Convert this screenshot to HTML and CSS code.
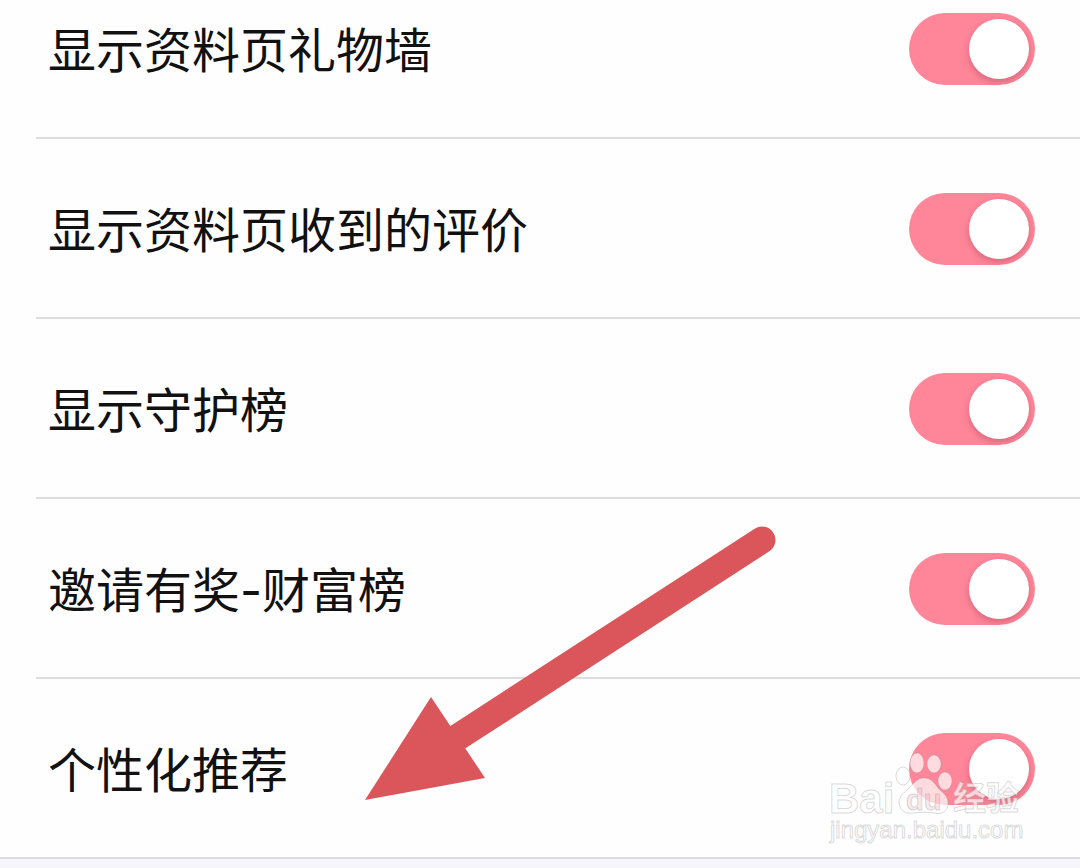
FILE: index.html
```
<!DOCTYPE html>
<html lang="zh-CN">
<head>
    <meta charset="UTF-8">
    <meta name="viewport" content="width=device-width, initial-scale=1.0">
    <title>隐私设置</title>
    <link rel="stylesheet" href="styles.css">
</head>
<body>
    <main class="settings">
        <div class="row">
            <label for="gift-wall">显示资料页礼物墙</label>
            <input type="checkbox" class="switch" id="gift-wall" checked>
        </div>
        <div class="row">
            <label for="reviews">显示资料页收到的评价</label>
            <input type="checkbox" class="switch" id="reviews" checked>
        </div>
        <div class="row">
            <label for="guard-rank">显示守护榜</label>
            <input type="checkbox" class="switch" id="guard-rank" checked>
        </div>
        <div class="row">
            <label for="wealth-rank">邀请有奖-财富榜</label>
            <input type="checkbox" class="switch" id="wealth-rank" checked>
        </div>
        <div class="row">
            <label for="recommend">个性化推荐</label>
            <input type="checkbox" class="switch" id="recommend" checked>
        </div>

        <!-- Arrow pointing at the last setting -->
        <svg class="arrow" width="412" height="276" viewBox="0 0 412 276" aria-hidden="true">
            <line x1="90" y1="214" x2="397" y2="15" stroke="#db565b" stroke-width="27" stroke-linecap="round"/>
            <path d="M0 275L66 172L120 253Z" fill="#db565b"/>
        </svg>

        <!-- Watermark -->
        <svg class="watermark" width="210" height="104" viewBox="0 0 210 104" aria-hidden="true">
            <g class="mark">
                <text class="brand" x="5" y="67">Bai</text>
                <ellipse cx="79" cy="30" rx="7" ry="9"/>
                <ellipse cx="93" cy="17" rx="7" ry="10"/>
                <ellipse cx="110" cy="18" rx="7" ry="9"/>
                <ellipse cx="121" cy="35" rx="7" ry="9"/>
                <path d="M100 32C92 32 89 39 83 44C77 49 75 52 75 57C76 65 82 68 89 67C97 66 103 66 110 67C119 69 124 65 124 57C124 50 119 47 115 43C110 37 108 32 100 32Z"/>
                <text class="du" x="82" y="64">du</text>
                <text class="cjk" x="129" y="64">经验</text>
                <text class="url" x="6" y="92">jingyan.baidu.com</text>
            </g>
        </svg>
    </main>
</body>
</html>
```
FILE: styles.css
```
* {
    box-sizing: border-box;
}
body {
    margin: 0;
    background-color: #f5f5fb;
    color: #111;
    font-family: Inter, "Noto Sans CJK SC", sans-serif;
}
.settings {
    position: relative;
    background-color: #fefefe;
    border-bottom: 2px solid #dcdce0;
}
.row {
    display: flex;
    align-items: center;
    justify-content: space-between;
    margin-left: 36px;
    padding: 54px 45px 52px 12px;
    border-bottom: 2px solid #ddd;
}
.row:first-child {
    padding-top: 13px;
}
.row:nth-child(5) {
    border-bottom: none;
}
.row label {
    padding-top: 4px;
    font-size: 48px;
    line-height: 68px;
}
.switch {
    appearance: none;
    flex: none;
    width: 126px;
    height: 72px;
    margin: 0;
    padding: 6px;
    border-radius: 36px;
    background-color: #ccc;
    cursor: pointer;
}
.switch::before {
    content: "";
    display: block;
    width: 60px;
    height: 60px;
    border-radius: 50%;
    background-color: #fff;
    box-shadow: 0 3px 6px rgba(90, 20, 40, 0.25);
}
.switch:checked {
    background-color: #ff8598;
}
.switch:checked::before {
    margin-left: auto;
}
.arrow {
    position: absolute;
    left: 365px;
    bottom: 56px;
    pointer-events: none;
}
.watermark {
    position: absolute;
    right: 46px;
    bottom: 7px;
    pointer-events: none;
}
.mark {
    fill: rgba(255, 255, 255, 0.7);
    stroke: rgba(150, 150, 150, 0.35);
    stroke-width: 1;
}
.brand {
    font: bold 42px "Liberation Sans", sans-serif;
}
.du {
    font: bold 29px "Liberation Sans", sans-serif;
    fill: rgba(240, 130, 150, 0.2);
}
.cjk {
    font: bold 33px "Noto Sans CJK SC", sans-serif;
}
.url {
    font: 24px "Liberation Sans", sans-serif;
}
```
